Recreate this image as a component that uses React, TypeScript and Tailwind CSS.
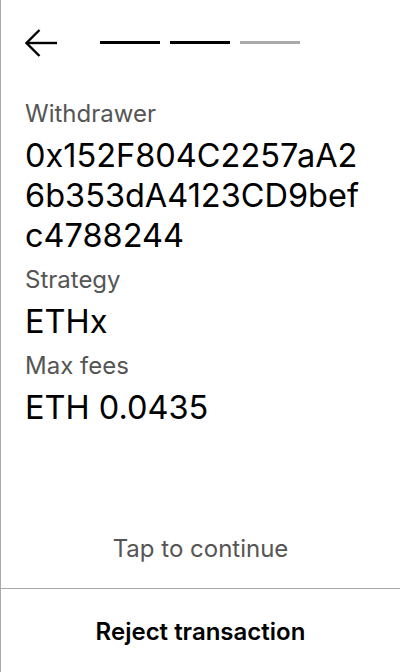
import React from "react";

const fields = [
  { label: "Withdrawer", value: "0x152F804C2257aA26b353dA4123CD9befc4788244" },
  { label: "Strategy", value: "ETHx" },
  { label: "Max fees", value: "ETH 0.0435" },
];

const BackArrow = () => (
  <svg width="34" height="30" viewBox="0 0 34 30" fill="none" stroke="#000" strokeWidth="2.4">
    <path d="M1.5 15 H32" />
    <path d="M14.5 2 L1.5 15 L14.5 28" />
  </svg>
);

export default function App() {
  return (
    <div
      className="flex h-[672px] w-[400px] flex-col border-l border-[#aaaaaa] bg-white text-black"
      style={{ fontFamily: "Inter, 'Noto Sans', sans-serif" }}
    >
      {/* header */}
      <div className="flex h-[84px] items-center pl-6 pt-[1px]">
        <button className="flex items-center">
          <BackArrow />
        </button>
        <div className="ml-[41px] flex gap-[10px]">
          <div className="h-[3px] w-[60px] bg-black" />
          <div className="h-[3px] w-[60px] bg-black" />
          <div className="h-[3px] w-[60px] bg-[#aaaaaa]" />
        </div>
      </div>

      {/* details */}
      <div className="flex flex-1 flex-col pl-6 pr-[30px] pt-[6px]">
        {fields.map((f) => (
          <div key={f.label} className="flex flex-col">
            <span className="mb-[4px] pt-[6px] text-[24px] leading-[36px] text-[#555555]">{f.label}</span>
            <span className="break-all text-[32.5px] leading-[40px] text-black">{f.value}</span>
          </div>
        ))}
      </div>

      {/* footer */}
      <div className="flex h-[82px] items-center justify-center pt-[4px] text-[24px] text-[#555555]">
        Tap to continue
      </div>
      <button className="flex h-[84px] items-center justify-center border-t border-[#aaaaaa] pt-[3px] text-[24px] font-semibold">
        Reject transaction
      </button>
    </div>
  );
}
